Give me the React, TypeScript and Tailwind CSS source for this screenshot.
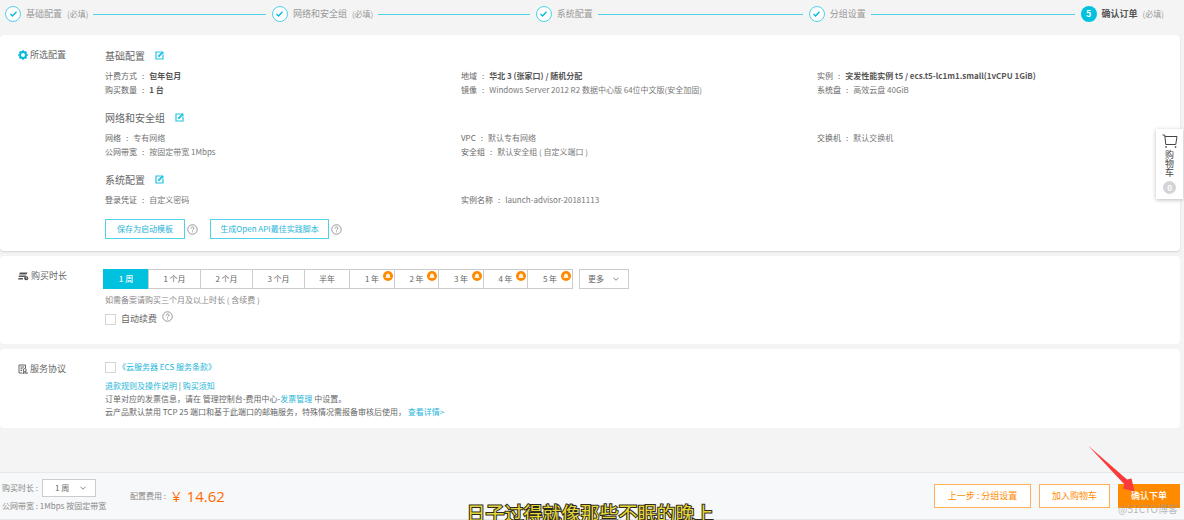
import { useState } from 'react';
import type { ReactNode } from 'react';

// ─── Data ─────────────────────────────────────────────────────────────────────

type Field = { label: string; value: string; strong?: boolean };
type Section = { title: string; columns: Field[][] };

const STEPS = [
  { title: '基础配置', required: true },
  { title: '网络和安全组', required: true },
  { title: '系统配置', required: false },
  { title: '分组设置', required: false },
];

const SECTIONS: Section[] = [
  {
    title: '基础配置',
    columns: [
      [
        { label: '计费方式', value: '包年包月', strong: true },
        { label: '购买数量', value: '1 台', strong: true },
      ],
      [
        { label: '地域', value: '华北 3 (张家口) / 随机分配', strong: true },
        { label: '镜像', value: 'Windows Server 2012 R2 数据中心版 64位中文版(安全加固)' },
      ],
      [
        { label: '实例', value: '突发性能实例 t5 / ecs.t5-lc1m1.small(1vCPU 1GiB)', strong: true },
        { label: '系统盘', value: '高效云盘 40GiB' },
      ],
    ],
  },
  {
    title: '网络和安全组',
    columns: [
      [
        { label: '网络', value: '专有网络' },
        { label: '公网带宽', value: '按固定带宽 1Mbps' },
      ],
      [
        { label: 'VPC', value: '默认专有网络' },
        { label: '安全组', value: '默认安全组 ( 自定义端口 )' },
      ],
      [{ label: '交换机', value: '默认交换机' }],
    ],
  },
  {
    title: '系统配置',
    columns: [
      [{ label: '登录凭证', value: '自定义密码' }],
      [{ label: '实例名称', value: 'launch-advisor-20181113' }],
      [],
    ],
  },
];

const DURATIONS = [
  { label: '1 周', width: 'w-[45px]' },
  { label: '1 个月', width: 'w-[52px]' },
  { label: '2 个月', width: 'w-[52px]' },
  { label: '3 个月', width: 'w-[52px]' },
  { label: '半年', width: 'w-[45px]' },
  { label: '1 年', width: 'w-[45px]', promo: true },
  { label: '2 年', width: 'w-[44px]', promo: true },
  { label: '3 年', width: 'w-[45px]', promo: true },
  { label: '4 年', width: 'w-[44px]', promo: true },
  { label: '5 年', width: 'w-[45px]', promo: true },
];

// ─── Icons ────────────────────────────────────────────────────────────────────

function GearIcon() {
  return (
    <svg viewBox="0 0 20 20" className="h-2.5 w-2.5 shrink-0" aria-hidden="true">
      <circle cx="10" cy="10" r="5.9" fill="none" stroke="#00b9dc" strokeWidth="3.8" />
      <g stroke="#00b9dc" strokeWidth="3.4">
        <path d="M10 .3v3M10 16.700v3M.3 10h3M16.700 10h3M3.200 3.200l2 2M14.800 14.800l2 2M3.200 16.800l2-2M14.800 5.200l2-2" />
      </g>
    </svg>
  );
}

function DurationIcon() {
  return (
    <svg viewBox="0 0 22 20" className="h-2.5 w-[11px] shrink-0" aria-hidden="true">
      <path d="M4 3h15l-2 4H2zM2 9h14l-1 3H1zM1 14h9v3H0z" fill="#555" />
      <circle cx="16.500" cy="14.500" r="4" fill="#444" />
      <path d="M16.500 12v3h2" fill="none" stroke="#fff" strokeWidth="1.200" />
    </svg>
  );
}

function AgreementIcon() {
  return (
    <svg viewBox="0 0 20 20" className="h-2.5 w-2.5 shrink-0" fill="none" stroke="#555" strokeWidth="1.800" aria-hidden="true">
      <path d="M9 18H2V2h13v6M5 6h7M5 9.500h4M5 13h3" />
      <circle cx="13.500" cy="12" r="3" />
      <path d="M11.500 14.500 10.500 19l3-1.500 3 1.500-1-4.500M17 18h3" />
    </svg>
  );
}

function EditIcon() {
  return (
    <svg viewBox="0 0 18 18" className="h-[9px] w-[9px]" fill="none" stroke="#22c3e2" aria-hidden="true">
      <path d="M11 2H2v14h14V8" strokeWidth="2.400" />
      <path d="M6.500 11.500 15.500 2.500" strokeWidth="3.600" />
      <path d="M11 2h5v5" strokeWidth="2" />
    </svg>
  );
}

function HelpIcon() {
  return (
    <svg viewBox="0 0 22 22" className="h-[11px] w-[11px]" fill="none" stroke="#8c8c8c" strokeWidth="1.800" aria-hidden="true">
      <circle cx="11" cy="11" r="9.500" />
      <path d="M8 9c0-4 6-4 6-.5 0 2-3 2.200-3 4.500M11 14.800v2" />
    </svg>
  );
}

function ChevronIcon() {
  return (
    <svg viewBox="0 0 12 8" className="h-1 w-1.5" fill="none" stroke="#777" strokeWidth="1.800" aria-hidden="true">
      <path d="m1 1.500 5 5 5-5" />
    </svg>
  );
}

function PromoBadge() {
  return (
    <svg viewBox="0 0 20 20" className="absolute right-px top-px h-2.5 w-2.5" aria-hidden="true">
      <circle cx="10" cy="10" r="10" fill="#ff8a00" />
      <path d="M10 4.500 14 8v4.500h1.200V14H4.800v-1.500H6V8z" fill="#fff1dc" />
    </svg>
  );
}

function CartIcon() {
  return (
    <svg viewBox="0 0 32 28" className="h-3.5 w-4" fill="none" stroke="#444" strokeWidth="2" aria-hidden="true">
      <path d="M1 2h4.500l2 19h20M6 5h24l-2.500 16" />
      <path d="M8 24.500v3M27 24.500v3" strokeWidth="3" />
    </svg>
  );
}

// ─── Building blocks ──────────────────────────────────────────────────────────

function StepBar() {
  return (
    <ol className="grid h-[35px] grid-cols-[267fr_264fr_273fr_272fr_auto] items-start pl-[5px] pr-5 pt-1.5 text-[9px] leading-4 text-[#999]">
      {STEPS.map((step) => (
        <li key={step.title} className="flex items-center gap-[5px] pr-1.5">
          <span className="flex h-4 w-4 shrink-0 items-center justify-center rounded-full border border-[#4fd2ea] bg-white">
            <svg viewBox="0 0 14 12" className="h-1.5 w-[7px]" fill="none" stroke="#00b9dc" strokeWidth="2.600" aria-hidden="true">
              <path d="m1 6 4 4 8-8.500" />
            </svg>
          </span>
          <span className="whitespace-nowrap">{step.title}</span>
          {step.required && <span className="whitespace-nowrap text-[8px]">(必填)</span>}
          <span className="h-px grow bg-[#4fd2ea]" />
        </li>
      ))}
      <li className="flex items-center gap-[5px]" aria-current="step">
        <span className="flex h-4 w-4 items-center justify-center rounded-full bg-[#00c1de] font-bold text-white">5</span>
        <span className="font-bold text-[#555]">确认订单</span>
        <span className="text-[8px]">(必填)</span>
      </li>
    </ol>
  );
}

function Panel({ icon, title, className, children }: { icon: ReactNode; title: string; className: string; children: ReactNode }) {
  return (
    <section className={`mr-1 flex rounded bg-white pr-[7px] ${className}`}>
      <h2 className="flex h-5 w-[105px] shrink-0 items-center gap-0.5 pl-[18px] text-[9px]">
        {icon}
        {title}
      </h2>
      <div className="min-w-0 grow">{children}</div>
    </section>
  );
}

function FieldRow({ field }: { field: Field }) {
  return (
    <div className="flex h-3.5 items-center gap-[5px] whitespace-nowrap">
      <dt>{field.label}</dt>
      <span>:</span>
      <dd className={field.strong ? 'font-bold text-[#555]' : 'text-[#777]'}>{field.value}</dd>
    </div>
  );
}

function DropDown({ label, options, className }: { label: string; options: string[]; className: string }) {
  return (
    <span className="relative inline-flex">
      <select aria-label={label} className={`appearance-none border border-[#ccc] bg-white text-[8px] text-[#666] ${className}`}>
        {options.map((option) => (
          <option key={option}>{option}</option>
        ))}
      </select>
      <span className="pointer-events-none absolute inset-y-0 right-2.5 flex items-center">
        <ChevronIcon />
      </span>
    </span>
  );
}

const linkClass = 'text-[#25b5d8]';
const checkboxClass =
  'h-[11px] w-[11px] appearance-none border border-[#d5d5d5] bg-white checked:border-[#00c1de] checked:bg-[#00c1de]';

// ─── Page ─────────────────────────────────────────────────────────────────────

export default function App() {
  const [duration, setDuration] = useState('1 周');

  return (
    <div className="relative flex min-h-screen flex-col overflow-hidden bg-[#f4f4f4] font-['Noto_Sans_CJK_SC',sans-serif] text-[8px] text-[#666]">
      <StepBar />

      <main className="flex flex-col gap-[5px]">
        <Panel icon={<GearIcon />} title="所选配置" className="pb-3 pt-2.5 shadow-[0_1px_2px_#d4d4d4]">
          <div className="flex flex-col gap-2.5">
            {SECTIONS.map((section) => (
              <div key={section.title}>
                <h3 className="flex h-5 items-center gap-2.5 text-[10px]">
                  {section.title}
                  <button type="button" aria-label={`编辑${section.title}`}>
                    <EditIcon />
                  </button>
                </h3>
                <dl className="mt-1 grid grid-cols-3">
                  {section.columns.map((fields, index) => (
                    <div key={index}>
                      {fields.map((field) => (
                        <FieldRow key={field.label} field={field} />
                      ))}
                    </div>
                  ))}
                </dl>
              </div>
            ))}
          </div>
          <div className="mt-3 flex items-center">
            <button type="button" className="h-5 w-20 border border-[#4fd2ea] text-[#25b5d8]">
              保存为启动模板
            </button>
            <button type="button" aria-label="启动模板说明" className="ml-0.5 mr-3">
              <HelpIcon />
            </button>
            <button type="button" className="h-5 w-[119px] border border-[#4fd2ea] text-[#25b5d8]">
              生成Open API最佳实践脚本
            </button>
            <button type="button" aria-label="脚本说明" className="ml-0.5">
              <HelpIcon />
            </button>
          </div>
        </Panel>

        <Panel icon={<DurationIcon />} title="购买时长" className="pb-[17px] pt-2.5">
          <div className="-ml-0.5 mt-[3px] flex gap-1.5">
            <div className="flex border-r border-[#ccc]">
              {DURATIONS.map((item) => (
                <button
                  key={item.label}
                  type="button"
                  aria-pressed={duration === item.label}
                  onClick={() => setDuration(item.label)}
                  className={`relative h-5 border-y border-l ${item.width} ${
                    duration === item.label ? 'border-[#00c1de] bg-[#00c1de] font-medium text-white' : 'border-[#ccc] bg-white'
                  }`}
                >
                  {item.label}
                  {item.promo && <PromoBadge />}
                </button>
              ))}
            </div>
            <DropDown label="更多时长" options={['更多']} className="h-5 w-[50px] pl-2" />
          </div>
          <p className="mt-1 h-3.5 leading-[14px] text-[#888]">如需备案请购买三个月及以上时长 ( 含续费 )</p>
          <div className="mt-1 flex h-4 items-center gap-[5px] text-[9px]">
            <label className="flex items-center gap-[5px]">
              <input type="checkbox" className={checkboxClass} />
              自动续费
            </label>
            <button type="button" aria-label="自动续费说明" className="self-start">
              <HelpIcon />
            </button>
          </div>
        </Panel>

        <Panel icon={<AgreementIcon />} title="服务协议" className="pb-2.5 pt-2.5">
          <div className="flex h-4 items-center gap-0.5">
            <input id="agree" type="checkbox" className={checkboxClass} />
            <label htmlFor="agree">
              <a href="#terms" className={linkClass}>《云服务器 ECS 服务条款》</a>
            </label>
          </div>
          <div className="mt-1 leading-[13px]">
            <p>
              <a href="#refund" className={linkClass}>退款规则及操作说明</a>
              {' | '}
              <a href="#notice" className={linkClass}>购买须知</a>
            </p>
            <p>
              订单对应的发票信息，请在 管理控制台-费用中心-
              <a href="#invoice" className={linkClass}>发票管理</a> 中设置。
            </p>
            <p>
              云产品默认禁用 TCP 25 端口和基于此端口的邮箱服务，特殊情况需报备审核后使用，{' '}
              <a href="#detail" className={linkClass}>查看详情&gt;</a>
            </p>
          </div>
        </Panel>
      </main>

      <footer className="mt-auto flex h-12 items-center border-y border-[#e6e8ea] bg-[#f7f8fa] pl-0.5 pr-1">
        <div className="w-32 text-[#888]">
          <div className="flex items-center gap-1">
            <span>购买时长 :</span>
            <DropDown label="购买时长" options={['1 周', '1 个月', '1 年']} className="h-[18px] w-[54px] pl-3" />
          </div>
          <p className="mt-0.5 h-3.5 leading-[14px]">公网带宽 : 1Mbps 按固定带宽</p>
        </div>
        <p className="flex items-center text-[#888]">
          配置费用 :
          <span className="ml-1.5 flex gap-1.5 font-['Open_Sans','Noto_Sans_CJK_SC',sans-serif] text-[15px] text-[#ff6a00]">
            <span>¥</span>
            <span>14.62</span>
          </span>
        </p>
        <div className="ml-auto flex gap-2 text-[9px]">
          <button type="button" className="h-6 w-[97px] border border-[#ffb054] bg-white text-[#ff8a00]">
            上一步 : 分组设置
          </button>
          <button type="button" className="h-6 w-[71px] border border-[#ffb054] bg-white text-[#ff8a00]">
            加入购物车
          </button>
          <button type="button" className="h-6 w-[62px] bg-[#ff8a00] font-medium text-white">
            确认下单
          </button>
        </div>
      </footer>

      {/* Floating cart */}
      <aside className="absolute right-px top-[129px]">
        <button
          type="button"
          className="flex w-[27px] flex-col items-center bg-white pb-[5px] pt-[5px] text-[9px] leading-[9px] text-[#444] shadow-[0_1px_4px_#bbb]"
        >
          <CartIcon />
          <span className="mt-0.5 w-[9px]">购物车</span>
          <span className="mt-1 flex h-[13px] w-[13px] items-center justify-center rounded-full bg-[#d2d4d6] text-[8px] font-bold text-white">0</span>
        </button>
      </aside>

      {/* Caption running off the lower edge */}
      <p className="pointer-events-none absolute inset-x-0 bottom-0 h-[17px] overflow-hidden pr-1 text-center text-[19px] leading-[19px] text-[#e6d63a] [paint-order:stroke_fill] [-webkit-text-stroke:2px_#2c2c20]">
        日子过得就像那些不眠的晚上
      </p>

      <span className="pointer-events-none absolute bottom-0 right-1.5 text-[10px] leading-[22px] text-[#999]/70">@51CTO博客</span>

      {/* Arrow pointing at the confirm button */}
      <svg viewBox="0 0 48 48" className="pointer-events-none absolute bottom-[27px] right-12 h-12 w-12" aria-hidden="true">
        <path d="M0 .5 39 34.500 43.500 33.500 46.500 46.500 35 43.500 36.500 39.500z" fill="#fb3b3b" />
      </svg>
    </div>
  );
}
